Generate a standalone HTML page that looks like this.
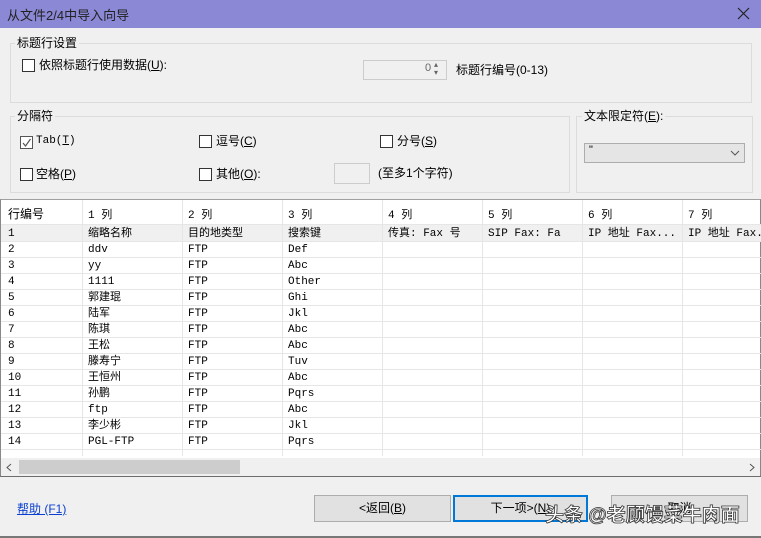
<!DOCTYPE html>
<html><head><meta charset="utf-8"><style>
*{margin:0;padding:0;box-sizing:border-box}
body{width:761px;height:538px;background:#f0f0f0;position:relative;overflow:hidden;font-family:"Liberation Sans","Noto Sans CJK SC",sans-serif;font-size:12px;color:#000}
.a{position:absolute;white-space:nowrap}
.tb{left:0;top:0;width:761px;height:28px;background:#8b88d6}
.grp{position:absolute;border:1px solid #dcdcdc}
.lbl{position:absolute;background:#f0f0f0;padding:0 2px;font-size:12px}
.cb{position:absolute;width:13px;height:13px;border:1px solid #333;background:#fff}
.grid{position:absolute;left:0;top:199px;width:761px;height:278px;background:#fff;border-top:1px solid #a0a0a0;border-bottom:2px solid #6d6d6d;border-left:1px solid #888;border-right:1px solid #888}
.g{font-family:"Liberation Mono","Noto Sans CJK SC",monospace;font-size:11px}
.btn{position:absolute;height:27px;top:495px;background:#e1e1e1;border:1px solid #adadad;text-align:center;line-height:25px;font-size:12px}
</style></head><body>
<div class="a tb"></div>
<div class="a" style="left:7px;top:5px;font-size:13px;color:#222">从文件2/4中导入向导</div>
<svg class="a" style="left:737px;top:7px" width="13" height="13"><path d="M1 1L12 12M12 1L1 12" stroke="#222" stroke-width="1.2"/></svg>

<div class="grp" style="left:10px;top:43px;width:742px;height:60px"></div>
<div class="lbl" style="left:15px;top:34px">标题行设置</div>
<div class="cb" style="left:22px;top:59px"></div>
<div class="a" style="left:39px;top:56px">依照标题行使用数据(<u>U</u>):</div>
<div class="a" style="left:363px;top:60px;width:84px;height:20px;border:1px solid #ccc;background:#f0f0f0"></div>
<div class="a" style="left:425px;top:62px;font-size:11px;color:#666">0</div>
<div class="a" style="left:434px;top:61px;font-size:8px;color:#666;line-height:8px">▴<br>▾</div>
<div class="a" style="left:456px;top:61px">标题行编号(0-13)</div>

<div class="grp" style="left:10px;top:116px;width:560px;height:77px"></div>
<div class="lbl" style="left:15px;top:107px">分隔符</div>
<div class="cb" style="left:20px;top:136px;border-color:#555"></div>
<svg class="a" style="left:20px;top:136px" width="13" height="13"><path d="M3 7L5.5 10L10.5 3" stroke="#555" fill="none" stroke-width="1.2"/></svg>
<div class="a" style="left:36px;top:135px;font-family:'Liberation Mono',monospace;font-size:11px">Tab(<u>T</u>)</div>
<div class="cb" style="left:199px;top:135px"></div>
<div class="a" style="left:216px;top:132px">逗号(<u>C</u>)</div>
<div class="cb" style="left:380px;top:135px"></div>
<div class="a" style="left:397px;top:132px">分号(<u>S</u>)</div>
<div class="cb" style="left:20px;top:168px"></div>
<div class="a" style="left:36px;top:165px">空格(<u>P</u>)</div>
<div class="cb" style="left:199px;top:168px"></div>
<div class="a" style="left:216px;top:165px">其他(<u>O</u>):</div>
<div class="a" style="left:334px;top:163px;width:36px;height:21px;border:1px solid #ccc;background:#f0f0f0"></div>
<div class="a" style="left:378px;top:164px">(至多1个字符)</div>

<div class="grp" style="left:576px;top:116px;width:177px;height:77px"></div>
<div class="lbl" style="left:582px;top:107px">文本限定符(<u>E</u>):</div>
<div class="a" style="left:584px;top:143px;width:161px;height:20px;border:1px solid #adadad;background:#e5e5e5"></div>
<div class="a" style="left:589px;top:144px;font-size:11px">"</div>
<svg class="a" style="left:730px;top:150px" width="10" height="6"><path d="M1 1L5 5L9 1" stroke="#555" fill="none"/></svg>

<div class="grid">
<svg class="a" style="left:0;top:0" width="760" height="256">
<rect x="0" y="25" width="760" height="16" fill="#f0f0f0"/>
<g stroke="#e6e6e6">
<line x1="81.5" y1="0" x2="81.5" y2="256"/><line x1="181.5" y1="0" x2="181.5" y2="256"/><line x1="281.5" y1="0" x2="281.5" y2="256"/><line x1="381.5" y1="0" x2="381.5" y2="256"/><line x1="481.5" y1="0" x2="481.5" y2="256"/><line x1="581.5" y1="0" x2="581.5" y2="256"/><line x1="681.5" y1="0" x2="681.5" y2="256"/>
<line x1="0" y1="24.5" x2="760" y2="24.5"/>
<line x1="0" y1="41.5" x2="760" y2="41.5"/><line x1="0" y1="57.5" x2="760" y2="57.5"/><line x1="0" y1="73.5" x2="760" y2="73.5"/><line x1="0" y1="89.5" x2="760" y2="89.5"/><line x1="0" y1="105.5" x2="760" y2="105.5"/><line x1="0" y1="121.5" x2="760" y2="121.5"/><line x1="0" y1="137.5" x2="760" y2="137.5"/><line x1="0" y1="153.5" x2="760" y2="153.5"/><line x1="0" y1="169.5" x2="760" y2="169.5"/><line x1="0" y1="185.5" x2="760" y2="185.5"/><line x1="0" y1="201.5" x2="760" y2="201.5"/><line x1="0" y1="217.5" x2="760" y2="217.5"/><line x1="0" y1="233.5" x2="760" y2="233.5"/><line x1="0" y1="249.5" x2="760" y2="249.5"/>
</g></svg>
<div class="a" style="left:7px;top:5px;font-size:12px">行编号</div>
<div class="a g" style="left:87px;top:6px">1 列</div><div class="a g" style="left:187px;top:6px">2 列</div><div class="a g" style="left:287px;top:6px">3 列</div><div class="a g" style="left:387px;top:6px">4 列</div><div class="a g" style="left:487px;top:6px">5 列</div><div class="a g" style="left:587px;top:6px">6 列</div><div class="a g" style="left:687px;top:6px">7 列</div>
<div class="a g" style="left:7px;top:26px;line-height:16px">1<br>2<br>3<br>4<br>5<br>6<br>7<br>8<br>9<br>10<br>11<br>12<br>13<br>14</div>
<div class="a g" style="left:87px;top:26px;line-height:16px">缩略名称<br>ddv<br>yy<br>1111<br>郭建琨<br>陆军<br>陈琪<br>王松<br>滕寿宁<br>王恒州<br>孙鹏<br>ftp<br>李少彬<br>PGL-FTP</div>
<div class="a g" style="left:187px;top:26px;line-height:16px">目的地类型<br>FTP<br>FTP<br>FTP<br>FTP<br>FTP<br>FTP<br>FTP<br>FTP<br>FTP<br>FTP<br>FTP<br>FTP<br>FTP</div>
<div class="a g" style="left:287px;top:26px;line-height:16px">搜索键<br>Def<br>Abc<br>Other<br>Ghi<br>Jkl<br>Abc<br>Abc<br>Tuv<br>Abc<br>Pqrs<br>Abc<br>Jkl<br>Pqrs</div>
<div class="a g" style="left:387px;top:26px;line-height:16px">传真: Fax 号</div>
<div class="a g" style="left:487px;top:26px;line-height:16px">SIP Fax: Fa</div>
<div class="a g" style="left:587px;top:26px;line-height:16px">IP 地址 Fax...</div>
<div class="a g" style="left:687px;top:26px;line-height:16px">IP 地址 Fax.</div>
<div class="a" style="left:0;top:258px;width:759px;height:18px;background:#f0f0f0"></div>
<div class="a" style="left:18px;top:260px;width:221px;height:14px;background:#cdcdcd"></div>
<svg class="a" style="left:5px;top:263px" width="6" height="9"><path d="M5 1L1 4.5L5 8" stroke="#555" fill="none"/></svg>
<svg class="a" style="left:748px;top:263px" width="6" height="9"><path d="M1 1L5 4.5L1 8" stroke="#555" fill="none"/></svg>
</div>

<div class="a" style="left:17px;top:500px;color:#0b3fd0;text-decoration:underline">帮助 (F1)</div>
<div class="btn" style="left:314px;width:137px">&lt;返回(<u>B</u>)</div>
<div class="btn" style="left:453px;width:135px;border:2px solid #0078d7;line-height:23px">下一项&gt;(<u>N</u>)</div>
<div class="btn" style="left:611px;width:137px">取消</div>
<div class="a" style="left:545px;top:500px;font-size:19px;color:#fff;-webkit-text-stroke:0.8px #333;font-weight:bold">头条 @老顾馒菜牛肉面</div>
<div class="a" style="left:0;top:536px;width:761px;height:2px;background:#777"></div>
</body></html>
